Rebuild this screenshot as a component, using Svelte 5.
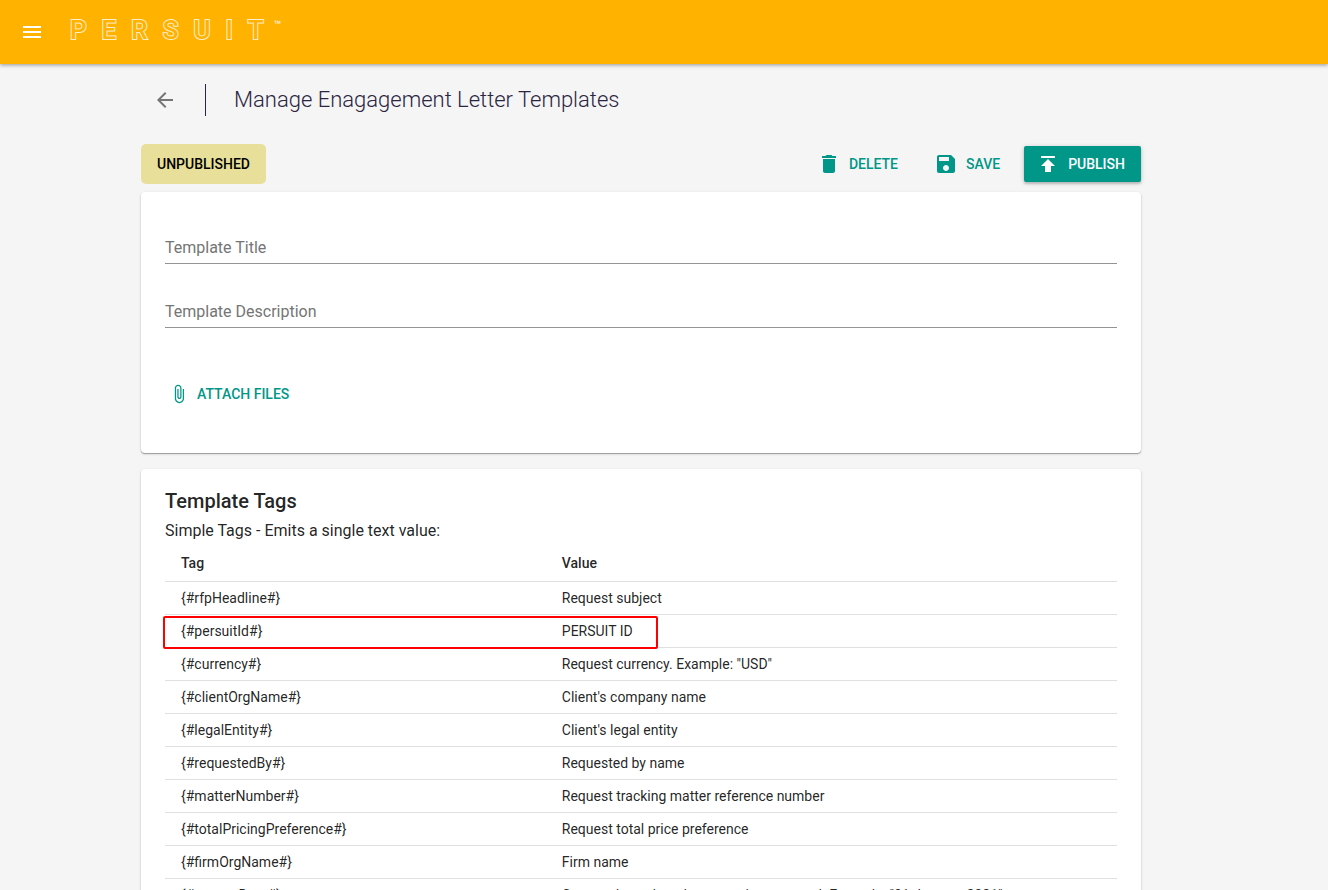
<script lang="ts">
	type Tag = { tag: string; value: string; highlighted?: boolean };

	const tags: Tag[] = [
		{ tag: "{#rfpHeadline#}", value: "Request subject" },
		{ tag: "{#persuitId#}", value: "PERSUIT ID", highlighted: true },
		{ tag: "{#currency#}", value: 'Request currency. Example: "USD"' },
		{ tag: "{#clientOrgName#}", value: "Client's company name" },
		{ tag: "{#legalEntity#}", value: "Client's legal entity" },
		{ tag: "{#requestedBy#}", value: "Requested by name" },
		{ tag: "{#matterNumber#}", value: "Request tracking matter reference number" },
		{ tag: "{#totalPricingPreference#}", value: "Request total price preference" },
		{ tag: "{#firmOrgName#}", value: "Firm name" },
		{
			tag: "{#currentDate#}",
			value: 'Current date when document is generated. Example: "31 January 2021"',
		},
	];

	let title = $state("");
	let description = $state("");
</script>

<header class="topbar">
	<button class="icon-button menu" aria-label="Menu">
		<svg viewBox="0 0 24 24"><path d="M3 18h18v-2H3v2zm0-5h18v-2H3v2zm0-7v2h18V6H3z" /></svg>
	</button>
	<a class="logo" href="/" aria-label="Persuit">
		{#each "PERSUIT" as letter}
			<span>{letter}</span>
		{/each}
		<small>™</small>
	</a>
</header>

<main class="page">
	<div class="container">
		<div class="heading">
			<button class="icon-button back" aria-label="Back">
				<svg viewBox="0 0 24 24">
					<path d="M20 11H7.83l5.59-5.59L12 4l-8 8 8 8 1.41-1.41L7.83 13H20v-2z" />
				</svg>
			</button>
			<h1>Manage Enagagement Letter Templates</h1>
		</div>

		<div class="toolbar">
			<span class="status">UNPUBLISHED</span>
			<div class="actions">
				<button class="button">
					<svg viewBox="0 0 24 24">
						<path d="M6 19c0 1.100.9 2 2 2h8c1.100 0 2-.9 2-2V7H6v12zM19 4h-3.500l-1-1h-5l-1 1H5v2h14V4z" />
					</svg>
					DELETE
				</button>
				<button class="button">
					<svg viewBox="0 0 24 24">
						<path
							d="M17 3H5c-1.110 0-2 .9-2 2v14c0 1.100.89 2 2 2h14c1.100 0 2-.9 2-2V7l-4-4zm-5 16c-1.660 0-3-1.340-3-3s1.340-3 3-3 3 1.340 3 3-1.340 3-3 3zm3-10H5V5h10v4z"
						/>
					</svg>
					SAVE
				</button>
				<button class="button contained">
					<svg viewBox="0 0 24 24"><path d="M5 4v2h14V4H5zm0 10h4v6h6v-6h4l-7-7-7 7z" /></svg>
					PUBLISH
				</button>
			</div>
		</div>

		<section class="card form">
			<input type="text" placeholder="Template Title" aria-label="Template Title" bind:value={title} />
			<input
				type="text"
				placeholder="Template Description"
				aria-label="Template Description"
				bind:value={description}
			/>
			<button class="button attach">
				<svg viewBox="0 0 24 24">
					<path
						d="M16.500 6v11.500c0 2.210-1.790 4-4 4s-4-1.790-4-4V5c0-1.380 1.120-2.500 2.500-2.500s2.500 1.120 2.500 2.500v10.500c0 .55-.45 1-1 1s-1-.45-1-1V6H10v9.500c0 1.380 1.120 2.500 2.500 2.500s2.500-1.120 2.500-2.500V5c0-2.210-1.790-4-4-4S7 2.790 7 5v12.500c0 3.040 2.460 5.500 5.500 5.500s5.500-2.460 5.500-5.500V6h-1.500z"
					/>
				</svg>
				ATTACH FILES
			</button>
		</section>

		<section class="card tags">
			<h2>Template Tags</h2>
			<p>Simple Tags - Emits a single text value:</p>
			<table>
				<thead>
					<tr>
						<th scope="col">Tag</th>
						<th scope="col">Value</th>
					</tr>
				</thead>
				<tbody>
					{#each tags as { tag, value, highlighted }}
						<tr class:highlighted>
							<td>{tag}</td>
							<td>{value}</td>
						</tr>
					{/each}
				</tbody>
			</table>
		</section>
	</div>
</main>

<style>
	:global(html) {
		scrollbar-width: none;
	}

	:global(body) {
		--amber: #ffb300;
		--teal: #009688;
		--text: rgba(0, 0, 0, 0.87);

		background-color: #f5f5f5;
		color: var(--text);
		font-family: Roboto, "Liberation Sans", sans-serif;
	}

	svg {
		display: block;
		width: 24px;
		height: 24px;
		fill: currentColor;
	}

	button {
		border: none;
		background: none;
		font-family: inherit;
		cursor: pointer;
	}

	.topbar {
		display: flex;
		align-items: center;
		gap: 26px;
		height: 64px;
		padding: 0 20px;
		background-color: var(--amber);
		color: #fff;
		box-shadow:
			0 1px 3px rgba(0, 0, 0, 0.2),
			0 2px 4px rgba(0, 0, 0, 0.16);
	}

	.icon-button {
		padding: 0;
	}

	.menu {
		color: #fff;
	}

	.logo {
		display: flex;
		gap: 15px;
		padding-bottom: 4px;
		font-size: 26px;
		font-weight: 500;
		line-height: 32px;
		color: var(--amber);
		text-decoration: none;

		& span {
			-webkit-text-stroke: 2px #fff0cc;
			paint-order: stroke fill;
		}

		& small {
			margin-left: -5px;
			font-size: 12px;
			font-weight: 400;
			line-height: 22px;
			color: #fff;
		}
	}

	.page {
		padding-right: 46px;
	}

	.container {
		max-width: 1000px;
		margin: 0 auto;
	}

	.heading {
		display: flex;
		align-items: center;
		padding: 20px 12px 28px;
	}

	.back {
		color: #757575;
	}

	h1 {
		margin: 0 0 0 28px;
		padding-left: 28px;
		border-left: 1px solid #2b2542;
		font-size: 22px;
		font-weight: 300;
		line-height: 32px;
		color: #2b2542;
	}

	.toolbar {
		display: flex;
		align-items: center;
		justify-content: space-between;
		margin-bottom: 8px;
	}

	.status {
		padding: 0 16px;
		border-radius: 5px;
		background-color: #e8e09a;
		color: #000;
		font-size: 14px;
		font-weight: 500;
		line-height: 40px;
	}

	.actions {
		display: flex;
		gap: 8px;
	}

	.button {
		display: flex;
		align-items: center;
		gap: 8px;
		height: 36px;
		padding: 0 16px 0 12px;
		border-radius: 2px;
		color: var(--teal);
		font-size: 14px;
		font-weight: 500;
	}

	.contained {
		background-color: var(--teal);
		color: #fff;
		box-shadow:
			0 2px 2px rgba(0, 0, 0, 0.14),
			0 1px 5px rgba(0, 0, 0, 0.2);
	}

	.card {
		padding: 16px 24px;
		border-radius: 4px;
		background-color: #fff;
		box-shadow:
			0 1px 1px rgba(0, 0, 0, 0.3),
			0 1px 3px rgba(0, 0, 0, 0.14);
	}

	.form {
		margin-bottom: 16px;
		padding: 40px 24px 41px;
	}

	input {
		display: block;
		box-sizing: border-box;
		width: 100%;
		height: 32px;
		margin-bottom: 32px;
		padding: 0;
		border: none;
		border-bottom: 1px solid #949494;
		border-radius: 0;
		outline: none;
		background: none;
		color: var(--text);
		font-family: inherit;
		font-size: 16px;

		&::placeholder {
			color: #757575;
			opacity: 1;
		}
	}

	.attach {
		margin-top: 48px;
		padding: 0 4px;

		& svg {
			width: 20px;
			height: 20px;
		}
	}

	h2 {
		margin: 0;
		font-size: 20px;
		font-weight: 500;
		line-height: 32px;
	}

	p {
		margin: 0;
		font-size: 16px;
		line-height: 28px;
	}

	table {
		width: 100%;
		border-collapse: separate;
		border-spacing: 0;
		table-layout: fixed;
		font-size: 14px;
		line-height: 20px;
	}

	th,
	td {
		padding: 6px 16px;
		border-bottom: 1px solid #e0e0e0;
		text-align: left;
	}

	th {
		padding: 8px 16px;
		font-weight: 500;

		&:first-child {
			width: 40%;
			box-sizing: border-box;
		}
	}

	.highlighted {
		position: relative;

		& td:first-child::after {
			content: "";
			position: absolute;
			top: 1px;
			left: -2px;
			box-sizing: border-box;
			width: 52%;
			height: 100%;
			border: 2px solid #f00;
			border-radius: 2px;
		}
	}
</style>
